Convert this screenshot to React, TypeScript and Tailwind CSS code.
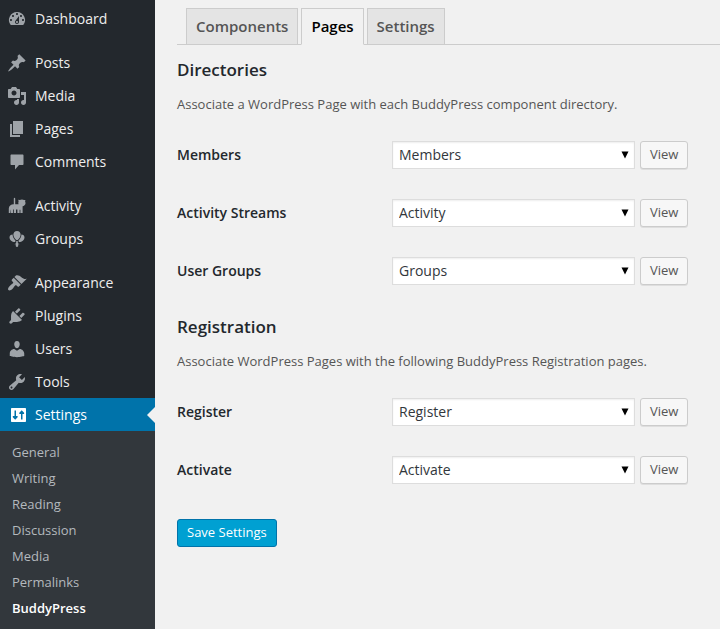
import { useState } from "react";
import type { ReactNode } from "react";

const icons: Record<string, ReactNode> = {
  dashboard: <path d="M3.76 16h12.48A7.998 7.998 0 0 0 10 3a7.998 7.998 0 0 0-6.24 13zM10 4c.55 0 1 .45 1 1s-.45 1-1 1-1-.45-1-1 .45-1 1-1zM6 6c.55 0 1 .45 1 1s-.45 1-1 1-1-.45-1-1 .45-1 1-1zm8 0c.55 0 1 .45 1 1s-.45 1-1 1-1-.45-1-1 .45-1 1-1zm-5.37 5.55L12 7v6c0 1.1-.9 2-2 2s-2-.9-2-2c0-.57.24-1.08.63-1.45zM4 10c.55 0 1 .45 1 1s-.45 1-1 1-1-.45-1-1 .45-1 1-1zm12 0c.55 0 1 .45 1 1s-.45 1-1 1-1-.45-1-1 .45-1 1-1zm-5 3c0-.55-.45-1-1-1s-1 .45-1 1 .45 1 1 1 1-.45 1-1z" />,
  post: <path d="M10.44 3.02l1.82-1.82 6.36 6.35-1.83 1.82c-1.05-.68-2.48-.57-3.41.36l-.75.75c-.92.93-1.04 2.35-.35 3.41l-1.83 1.82-2.41-2.41-2.8 2.79c-.42.42-3.38 2.71-3.8 2.29s1.86-3.39 2.28-3.81l2.79-2.79L4.1 9.36l1.83-1.82c1.05.69 2.48.57 3.4-.36l.75-.75c.93-.92 1.05-2.35.36-3.41z" />,
  media: <path d="M13 11V4c0-.55-.45-1-1-1h-1.67L9 1H5L3.67 3H2c-.55 0-1 .45-1 1v7c0 .55.45 1 1 1h10c.55 0 1-.45 1-1zM7 4.5c1.38 0 2.5 1.12 2.5 2.5S8.38 9.5 7 9.5 4.5 8.38 4.5 7 5.62 4.5 7 4.5zM14 6h5v10.5c0 1.38-1.12 2.5-2.5 2.5S14 17.88 14 16.5s1.12-2.5 2.5-2.5c.17 0 .34.02.5.05V9h-3V6zm-4 8.05V13h2v3.5c0 1.38-1.12 2.5-2.5 2.5S7 17.88 7 16.5 8.12 14 9.5 14c.17 0 .34.02.5.05z" />,
  page: <path d="M6 15V2h10v13H6zm-1 1h8v2H3V5h2v11z" />,
  comment: <path d="M4.500 2.500h11c.6 0 1 .4 1 1v8.500c0 .6-.4 1-1 1H12l-4 4.500V13H4.500c-.6 0-1-.4-1-1V3.500c0-.6.4-1 1-1z" />,
  activity: <path d="M6.800 2.500c0-1 1.400-1 1.400 0v5.700h3.300c-.3-1-.3-2 .1-2.900l-.4-1.500 1.600.3c1.300-.9 3-.9 4.200 0l1.400-.2-.3 1.500c.3.700.5 1.400.4 2.100-.2 1.600-1.400 2.500-2.900 2.700V17h-2.200v-3.200h-.8V17h-2.200v-3.500H9V17H6.800v-3.500H6V17H3.800v-3.200H3.600l-.4 3.200H1.800v-4.500c0-2.600 2-4.200 5-4.300z" />,
  groups: (
    <>
      <path d="M10 2c2.200 0 3.600 1.600 3.600 3.700 0 2-1.500 4.300-2.900 5.300H9.300C7.900 10 6.400 7.700 6.400 5.700 6.400 3.600 7.800 2 10 2z" />
      <path d="M5.600 5.500c0 2.200 1.300 4.600 2.900 6.100L8.200 13C5.500 13.300 2.500 11 2.500 8.500c0-1.800 1.300-3 3.100-3zM14.400 5.500c0 2.200-1.300 4.600-2.900 6.100l.3 1.400c2.700.3 5.700-2 5.700-4.500 0-1.800-1.300-3-3.100-3zM9.300 12h1.400l.2 2.200 1.600 1-1.600.2c.8 1 .2 2.600-.9 2.600s-1.700-1.600-.9-2.600l-1.600-.2 1.600-1z" />
    </>
  ),
  appearance: <path d="M14.480 11.060L7.410 3.990l1.500-1.500c.5-.56 2.300-.47 3.510.32 1.210.8 1.430 1.280 2.910 2.100 1.180.64 2.450 1.260 4.450.85zm-.71.71L6.700 4.700 4.930 6.470c-.39.39-.39 1.020 0 1.410l1.060 1.060c.39.39.39 1.030 0 1.420-.6.6-1.430 1.110-2.210 1.690-.35.26-.7.53-1.010.84C1.430 14.230.4 16.080 1.400 17.070c.99 1 2.840-.03 4.180-1.360.31-.31.58-.66.85-1.020.57-.78 1.080-1.610 1.690-2.210.39-.39 1.020-.39 1.410 0l1.060 1.060c.39.39 1.020.39 1.410 0z" />,
  plugins: <path d="M13.110 4.360L9.870 7.600 8 5.730l3.240-3.240c.35-.34 1.050-.2 1.560.32.52.51.66 1.210.31 1.550zm-8 1.770l.91-1.120 9.010 9.010-1.190.84c-.71.71-2.630 1.160-3.820 1.160H6.140L4.900 17.260c-.59.59-1.540.59-2.120 0-.59-.58-.59-1.530 0-2.120l1.240-1.240v-3.880c0-1.130.4-3.190 1.090-3.890zm7.260 3.970l3.240-3.240c.34-.35 1.040-.21 1.550.31.52.51.66 1.210.31 1.550l-3.240 3.250z" />,
  users: <path d="M10 9.250c-2.270 0-2.730-3.440-2.730-3.440C7 4.020 7.820 2 9.970 2c2.160 0 2.980 2.020 2.710 3.810 0 0-.41 3.440-2.680 3.440zm0 2.570L12.720 10c2.390 0 4.520 2.330 4.520 4.530v2.490s-3.650 1.130-7.240 1.130c-3.650 0-7.240-1.130-7.240-1.130v-2.490c0-2.250 1.940-4.480 4.470-4.480z" />,
  tools: <path d="M16.680 9.770c-1.340 1.340-3.300 1.670-4.950.99l-5.410 6.520c-.99.99-2.590.99-3.580 0s-.99-2.590 0-3.570l6.520-5.420c-.68-1.650-.35-3.610.99-4.950 1.280-1.280 3.120-1.620 4.720-1.060l-2.890 2.890 2.820 2.820 2.860-2.870c.53 1.580.18 3.390-1.080 4.650zM3.810 16.210c.4.39 1.040.39 1.430 0 .4-.4.4-1.040 0-1.430-.39-.4-1.030-.4-1.430 0-.39.39-.39 1.030 0 1.430z" />,
  settings: <path fillRule="evenodd" d="M5 3h13c.6 0 1 .4 1 1v12c0 .6-.4 1-1 1H5c-.6 0-1-.4-1-1V4c0-.6.400-1 1-1zM7.500 5.500V11H5.800v1.200l2.400 2.600 2.400-2.600V11H9V5.500zM14 14.500V9h-1.700V7.800l2.400-2.600 2.400 2.600V9h-1.600v5.500z" />,
};

const menu = [
  [{ name: "Dashboard", icon: "dashboard" }],
  [
    { name: "Posts", icon: "post" },
    { name: "Media", icon: "media" },
    { name: "Pages", icon: "page" },
    { name: "Comments", icon: "comment" },
  ],
  [
    { name: "Activity", icon: "activity" },
    { name: "Groups", icon: "groups" },
  ],
  [
    { name: "Appearance", icon: "appearance" },
    { name: "Plugins", icon: "plugins" },
    { name: "Users", icon: "users" },
    { name: "Tools", icon: "tools" },
    { name: "Settings", icon: "settings" },
  ],
];
const submenu = ["General", "Writing", "Reading", "Discussion", "Media", "Permalinks", "BuddyPress"];
const tabs = ["Components", "Pages", "Settings"];
const pages = ["Members", "Activity", "Groups", "Register", "Activate"];

function MenuItem({ name, icon }: { name: string; icon: string }) {
  const active = name === "Settings";
  return (
    <li>
      <a
        href="#"
        className={
          active
            ? "relative flex h-[33px] items-center gap-2 bg-[#0073aa] pl-[7px] text-white"
            : "flex h-[33px] items-center gap-2 pl-[7px] text-[#eeeeee] hover:text-[#00b9eb]"
        }
      >
        <svg viewBox="0 0 20 20" aria-hidden="true" className={active ? "size-5 fill-white" : "size-5 fill-[#9ea3a8]"}>
          {icons[icon]}
        </svg>
        {name}
        {active && <span className="absolute top-1/2 right-0 -mt-2 border-8 border-l-0 border-transparent border-r-[#f1f1f1]" />}
      </a>
    </li>
  );
}

function PageRow({ label, page }: { label: string; page: string }) {
  const [value, setValue] = useState(page);
  const id = "page-" + page.toLowerCase();
  return (
    <div className="flex items-center">
      <label htmlFor={id} className="w-[215px] shrink-0 text-sm font-semibold text-[#23282d]">
        {label}
      </label>
      <div className="relative w-[243px]">
        <select
          id={id}
          value={value}
          onChange={(e) => setValue(e.target.value)}
          className="block h-7 w-full appearance-none border border-[#dddddd] bg-white px-[6px] text-sm text-[#32373c] shadow-[inset_0_1px_2px_rgba(0,0,0,0.07)]"
        >
          {pages.map((p) => (
            <option key={p}>{p}</option>
          ))}
        </select>
        <svg viewBox="0 0 8 8" aria-hidden="true" className="pointer-events-none absolute top-2.5 right-1.5 size-2 fill-black">
          <path d="M.5 0.500h7L4 7.500z" />
        </svg>
      </div>
      <button
        type="button"
        className="ml-[5px] h-7 shrink-0 rounded-[3px] border border-[#cccccc] bg-[#f7f7f7] px-[9px] text-[13px] text-[#555555] shadow-[0_1px_0_rgba(0,0,0,0.08)]"
      >
        View
      </button>
    </div>
  );
}

function Section({ title, text, children }: { title: string; text: string; children: ReactNode }) {
  return (
    <section>
      <h3 className="text-[17px] leading-6 font-semibold text-[#23282d]">{title}</h3>
      <p className="mt-3 text-[13px] leading-5 text-[#555555]">{text}</p>
      <div className="mt-[27px] flex flex-col gap-[30px]">{children}</div>
    </section>
  );
}

export default function App() {
  const [tab, setTab] = useState("Pages");
  return (
    <div className="flex min-h-screen bg-[#f1f1f1] font-['Open_Sans',sans-serif]">
      <nav className="flex w-[155px] shrink-0 flex-col bg-[#23282d] pt-[2px] text-sm">
        <div className="flex flex-col gap-[11px]">
          {menu.map((group, i) => (
            <ul key={i}>
              {group.map((item) => (
                <MenuItem key={item.name} name={item.name} icon={item.icon} />
              ))}
            </ul>
          ))}
        </div>
        <ul className="grow bg-[#32373c] pt-2 text-[13px]">
          {submenu.map((s) => (
            <li key={s}>
              <a
                href="#"
                className={
                  s === "BuddyPress"
                    ? "flex h-[26px] items-center pl-3 font-semibold text-white"
                    : "flex h-[26px] items-center pl-3 text-[#b4b9be] hover:text-[#00b9eb]"
                }
              >
                {s}
              </a>
            </li>
          ))}
        </ul>
      </nav>

      <main className="min-w-0 grow pt-2 pl-[22px]">
        <div role="tablist" className="flex gap-[3px] border-b border-[#cccccc] pl-[9px]">
          {tabs.map((t) => (
            <button
              key={t}
              type="button"
              role="tab"
              aria-selected={t === tab}
              onClick={() => setTab(t)}
              className={
                t === tab
                  ? "-mb-px h-[37px] border border-[#cccccc] border-b-[#f1f1f1] bg-[#f1f1f1] px-[9px] text-[15px] font-semibold text-black"
                  : "h-9 border border-b-0 border-[#cccccc] bg-[#e4e4e4] px-[9px] text-[15px] font-semibold text-[#555555]"
              }
            >
              {t}
            </button>
          ))}
        </div>
        <form className="mt-[13px]" onSubmit={(e) => e.preventDefault()}>
          <div className="flex flex-col gap-[30px]">
            <Section title="Directories" text="Associate a WordPress Page with each BuddyPress component directory.">
              <PageRow label="Members" page="Members" />
              <PageRow label="Activity Streams" page="Activity" />
              <PageRow label="User Groups" page="Groups" />
            </Section>
            <Section title="Registration" text="Associate WordPress Pages with the following BuddyPress Registration pages.">
              <PageRow label="Register" page="Register" />
              <PageRow label="Activate" page="Activate" />
            </Section>
          </div>
          <button
            type="submit"
            className="mt-[35px] h-7 rounded-[3px] border border-[#0073aa] bg-[#00a0d2] px-[9px] text-[13px] text-white"
          >
            Save Settings
          </button>
        </form>
      </main>
    </div>
  );
}
